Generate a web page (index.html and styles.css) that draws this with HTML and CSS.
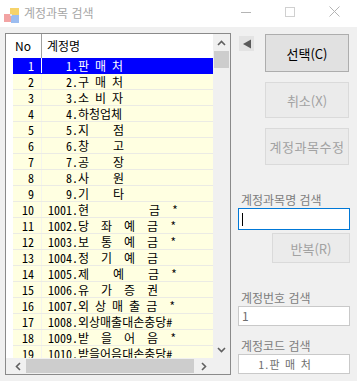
FILE: index.html
```html
<!DOCTYPE html>
<html lang="ko">
<head>
<meta charset="utf-8">
<title>계정과목 검색</title>
<link rel="stylesheet" href="styles.css">
</head>
<body>
<div class="window">
  <div class="titlebar">
    <svg class="appicon" width="18" height="18" viewBox="0 0 18 18">
      <rect x="7" y="2" width="9" height="8" fill="#f6d36b"/>
      <rect x="1" y="8" width="7" height="8" fill="#f2a3a3"/>
      <rect x="8" y="9" width="8" height="8" fill="#9cbdf0"/>
      <rect x="7" y="8" width="2" height="2" fill="#e8e8e8"/>
    </svg>
    <span class="title">계정과목 검색</span>
    <div class="caption">
      <span class="cbtn"><svg width="10" height="10" viewBox="0 0 10 10"><line x1="0" y1="5.5" x2="10" y2="5.5" stroke="#b4b4b4" stroke-width="1"/></svg></span>
      <span class="cbtn"><svg width="10" height="10" viewBox="0 0 10 10"><rect x="0.5" y="0.5" width="9" height="9" fill="none" stroke="#d0d0d0" stroke-width="1"/></svg></span>
      <span class="cbtn"><svg width="11" height="11" viewBox="0 0 11 11"><path d="M0.5 0.5 L10.5 10.5 M10.5 0.5 L0.5 10.5" stroke="#b4b4b4" stroke-width="1"/></svg></span>
    </div>
  </div>

  <div class="content">
    <div class="grid">
      <div class="gutter"></div>
      <div class="table">
        <div class="thead">
          <div class="h-no">No</div>
          <div class="h-nm">계정명</div>
        </div>
        <div class="tbody">
          <div class="row sel"><div class="c-no">1</div><div class="c-nm">   1.판 매 처</div></div>
          <div class="row"><div class="c-no">2</div><div class="c-nm">   2.구 매 처</div></div>
          <div class="row"><div class="c-no">3</div><div class="c-nm">   3.소 비 자</div></div>
          <div class="row"><div class="c-no">4</div><div class="c-nm">   4.하청업체</div></div>
          <div class="row"><div class="c-no">5</div><div class="c-nm">   5.지    점</div></div>
          <div class="row"><div class="c-no">6</div><div class="c-nm">   6.창    고</div></div>
          <div class="row"><div class="c-no">7</div><div class="c-nm">   7.공    장</div></div>
          <div class="row"><div class="c-no">8</div><div class="c-nm">   8.사    원</div></div>
          <div class="row"><div class="c-no">9</div><div class="c-nm">   9.기    타</div></div>
          <div class="row"><div class="c-no">10</div><div class="c-nm">1001.현          금  *</div></div>
          <div class="row"><div class="c-no">11</div><div class="c-nm">1002.당  좌  예  금  *</div></div>
          <div class="row"><div class="c-no">12</div><div class="c-nm">1003.보  통  예  금  *</div></div>
          <div class="row"><div class="c-no">13</div><div class="c-nm">1004.정  기  예  금</div></div>
          <div class="row"><div class="c-no">14</div><div class="c-nm">1005.제    예    금  *</div></div>
          <div class="row"><div class="c-no">15</div><div class="c-nm">1006.유  가  증  권</div></div>
          <div class="row"><div class="c-no">16</div><div class="c-nm">1007.외 상 매 출 금  *</div></div>
          <div class="row"><div class="c-no">17</div><div class="c-nm">1008.외상매출대손충당#</div></div>
          <div class="row"><div class="c-no">18</div><div class="c-nm">1009.받  을  어  음  *</div></div>
          <div class="row"><div class="c-no">19</div><div class="c-nm">1010.받을어음대손충당#</div></div>
        </div>
      </div>
      <div class="vscroll">
        <div class="sbtn"><svg width="9" height="6" viewBox="0 0 9 6"><path d="M1 5 L4.5 1.5 L8 5" fill="none" stroke="#606060" stroke-width="1.6"/></svg></div>
        <div class="vthumb"></div>
        <div class="vtrack"></div>
        <div class="sbtn"><svg width="9" height="6" viewBox="0 0 9 6"><path d="M1 1 L4.5 4.5 L8 1" fill="none" stroke="#606060" stroke-width="1.6"/></svg></div>
      </div>
      <div class="hscroll">
        <div class="hbtn left"><svg width="6" height="9" viewBox="0 0 6 9"><path d="M5 1 L1.5 4.5 L5 8" fill="none" stroke="#606060" stroke-width="1.6"/></svg></div>
        <div class="hthumb"></div>
        <div class="htrack"></div>
        <div class="hbtn right"><svg width="6" height="9" viewBox="0 0 6 9"><path d="M1 1 L4.5 4.5 L1 8" fill="none" stroke="#606060" stroke-width="1.6"/></svg></div>
      </div>
      <div class="corner"></div>
    </div>

    <div class="panel">
      <div class="toprow">
        <div class="arrowbtn"><svg width="10" height="10" viewBox="0 0 10 10"><path d="M9 0.5 L9 9.5 L1 5 Z" fill="#5a5a5a"/></svg></div>
        <div class="btn btn-select">선택(C)</div>
      </div>
      <div class="btn dis btn-cancel">취소(X)</div>
      <div class="btn dis btn-edit">계정과목수정</div>

      <div class="label lbl-name">계정과목명 검색</div>
      <div class="textbox focus"><span class="caret"></span></div>
      <div class="btn dis btn-repeat">반복(R)</div>

      <div class="label lbl-no">계정번호 검색</div>
      <div class="textbox ro">1</div>

      <div class="label lbl-code">계정코드 검색</div>
      <div class="textbox ro mono">   1.판 매 처</div>
    </div>
  </div>
</div>
</body>
</html>
```

FILE: styles.css
```css
* {
  box-sizing: border-box;
}

html, body {
  margin: 0;
  padding: 0;
}

body {
  background: #f0f0f0;
  font-family: "Noto Sans CJK KR", "Noto Sans", sans-serif;
  font-size: 12px;
  color: #000;
}

.window {
  width: 357px;
  height: 381px;
  overflow: hidden;
  background: #f0f0f0;
}

/* ---------- title bar ---------- */
.titlebar {
  height: 27px;
  background: #ffffff;
  display: flex;
  align-items: center;
  padding-left: 3px;
}

.appicon {
  display: block;
  margin-top: 2px;
}

.title {
  margin-left: 3px;
  color: #a6a6a6;
  font-size: 12px;
  line-height: 14px;
  margin-top: -2px;
}

.caption {
  margin-left: auto;
  margin-right: 1px;
  display: flex;
  height: 27px;
}

.cbtn {
  width: 44px;
  height: 27px;
  display: flex;
  align-items: center;
  justify-content: center;
  padding-bottom: 4px;
}

.cbtn svg {
  display: block;
}

/* ---------- content ---------- */
.content {
  display: flex;
  padding: 6px 0 0 5px;
}

.grid {
  width: 226px;
  height: 342px;
  border: 1px solid #8a8a8a;
  background: #ffffff;
  display: grid;
  grid-template-columns: 7px 200px 17px;
  grid-template-rows: 324px 16px;
}

.gutter {
  grid-column: 1;
  grid-row: 1;
  background: #ffffff;
}

.table {
  grid-column: 2;
  grid-row: 1;
  overflow: hidden;
  display: flex;
  flex-direction: column;
}

.thead {
  height: 24px;
  display: flex;
  background: #ffffff;
  flex: none;
}

.h-no {
  width: 29px;
  border-right: 1px solid #a0a0a0;
  padding-left: 2px;
  line-height: 24px;
}

.h-nm {
  padding-left: 5px;
  line-height: 24px;
}

.tbody {
  height: 300px;
  overflow: hidden;
}

.row {
  display: flex;
  height: 16px;
  background: #ffffe1;
  border-bottom: 1px solid #ebebe4;
  font-family: "Noto Sans Mono CJK KR", "Noto Sans CJK KR", monospace;
  font-feature-settings: "hwid";
  font-size: 12px;
  line-height: 15px;
}

.row.sel {
  background: #0000ff;
  color: #ffffff;
  border-bottom-color: #0000ff;
}

.c-no {
  width: 29px;
  flex: none;
  text-align: right;
  border-right: 1px solid #f4f4ee;
  padding-right: 7px;
}

.row.sel .c-no {
  border-right-color: #ffffff;
}

.c-nm {
  padding-left: 6px;
  white-space: pre;
}

/* ---------- scrollbars ---------- */
.vscroll {
  grid-column: 3;
  grid-row: 1;
  background: #f0f0f0;
  display: flex;
  flex-direction: column;
}

.sbtn {
  height: 17px;
  flex: none;
  display: flex;
  align-items: center;
  justify-content: center;
}

.sbtn svg, .hbtn svg {
  display: block;
}

.vthumb {
  height: 17px;
  flex: none;
  background: #cdcdcd;
  margin: 0 1px;
}

.vtrack {
  flex: 1;
}

.hscroll {
  grid-column: 1 / 3;
  grid-row: 2;
  background: #f0f0f0;
  display: flex;
}

.hbtn {
  display: flex;
  align-items: center;
  justify-content: center;
  flex: none;
}

.hbtn.left {
  width: 20px;
  padding-left: 3px;
}

.hbtn.right {
  width: 19px;
}

.hthumb {
  width: 168px;
  flex: none;
  background: #cdcdcd;
  margin: 1px 0;
}

.htrack {
  flex: 1;
}

.corner {
  grid-column: 3;
  grid-row: 2;
  background: #f0f0f0;
}

/* ---------- right panel ---------- */
.panel {
  width: 112px;
  margin-left: 7px;
  display: flex;
  flex-direction: column;
  align-items: flex-end;
}

.toprow {
  width: 100%;
  display: flex;
  align-items: flex-start;
  margin-top: 1px;
}

.arrowbtn {
  width: 15px;
  height: 15px;
  margin-top: 2px;
  margin-left: 1px;
  background: #e3e3e3;
  display: flex;
  align-items: center;
  justify-content: center;
}

.arrowbtn svg {
  display: block;
}

.btn {
  display: flex;
  align-items: center;
  justify-content: center;
  border: 1px solid #adadad;
  background: #e1e1e1;
  font-size: 13px;
  color: #000;
  margin-right: 1px;
}

.btn.dis {
  border-color: #dadada;
  background: #ebebeb;
  color: #a2a2a2;
}

.btn-select {
  width: 84px;
  height: 38px;
  margin-left: auto;
}

.btn-cancel {
  width: 84px;
  height: 36px;
  margin-top: 10px;
}

.btn-edit {
  width: 84px;
  height: 37px;
  margin-top: 10px;
  letter-spacing: 0.5px;
}

.label {
  align-self: stretch;
  padding-left: 3px;
  color: #7d7d7d;
  font-size: 12px;
  line-height: 16px;
}

.lbl-name {
  margin-top: 27px;
}

.textbox {
  align-self: stretch;
  background: #ffffff;
  border: 1px solid #c9c9c9;
  height: 20px;
  padding-left: 3px;
  color: #6e6e6e;
  font-size: 12px;
  line-height: 18px;
  white-space: pre;
  display: flex;
  align-items: center;
}

.textbox.focus {
  border-color: #0078d7;
  height: 22px;
}

.caret {
  display: block;
  width: 1px;
  height: 13px;
  background: #000;
}

.textbox.mono {
  font-family: "Noto Sans Mono CJK KR", "Noto Sans CJK KR", monospace;
  font-feature-settings: "hwid";
  font-size: 11px;
}

.btn-repeat {
  width: 78px;
  height: 30px;
  margin-top: 3px;
  margin-right: 0;
}

.lbl-no {
  margin-top: 27px;
}

.lbl-code {
  margin-top: 12px;
}
```
